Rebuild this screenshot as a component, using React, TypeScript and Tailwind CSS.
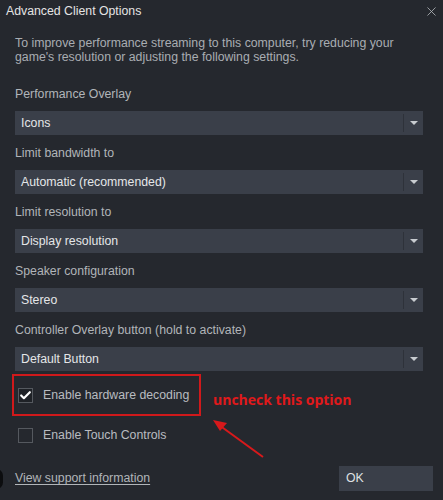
import { Check, X } from "lucide-react";

const selects = [
  { label: "Performance Overlay", value: "Icons" },
  { label: "Limit bandwidth to", value: "Automatic (recommended)" },
  { label: "Limit resolution to", value: "Display resolution" },
  { label: "Speaker configuration", value: "Stereo" },
  { label: "Controller Overlay button (hold to activate)", value: "Default Button" },
];

function Dropdown({ value }: { value: string }) {
  return (
    <div className="flex h-6 items-center bg-[#3a3f49] text-[#e4e6e8]">
      <span className="flex-1 pl-[6px]">{value}</span>
      <span className="h-[18px] w-px bg-[#2e323a]" />
      <span className="flex w-[19px] justify-center">
        <span className="h-0 w-0 border-x-[4px] border-t-[4px] border-x-transparent border-t-[#c8ccd0]" />
      </span>
    </div>
  );
}

export default function App() {
  return (
    <div className="relative h-[500px] w-[443px] overflow-hidden bg-[#25282e] font-['Liberation_Sans',Arial,sans-serif] text-[12.3px]">
      {/* ── Title bar ── */}
      <div className="flex h-[22px] items-center justify-between pl-[6px] pr-[4px]">
        <span className="text-[#e4e4e4]">Advanced Client Options</span>
        <X size={15} strokeWidth={1.3} className="text-[#b4b7bb]" />
      </div>

      <div className="px-[15px] pr-[20px]">
        <p className="mt-[14px] leading-[14px] text-[#a9adb2]">
          To improve performance streaming to this computer, try reducing your
          <br />
          game's resolution or adjusting the following settings.
        </p>

        <div className="mt-[22px] flex flex-col gap-[10px]">
          {selects.map((s) => (
            <div key={s.label}>
              <div className="mb-[9px] h-4 leading-4 text-[#b1b5b9]">{s.label}</div>
              <Dropdown value={s.value} />
            </div>
          ))}
        </div>
      </div>

      {/* ── Checkboxes ── */}
      <div className="relative mt-[16px] flex flex-col gap-[24px] px-[18px]">
        <div className="flex h-4 items-center gap-[10px]">
          <span className="flex h-[15px] w-[15px] items-center justify-center border border-[#55595f] bg-[#1f2227]">
            <Check size={13} strokeWidth={4} className="text-white" />
          </span>
          <span className="text-[#b9bcc0]">Enable hardware decoding</span>
        </div>
        <div className="flex h-4 items-center gap-[10px]">
          <span className="h-[15px] w-[15px] border border-[#55595f] bg-[#25282e]" />
          <span className="text-[#b9bcc0]">Enable Touch Controls</span>
        </div>

        {/* annotation */}
        <div className="absolute left-[12px] top-[-13px] h-[42px] w-[189px] border-2 border-[#d0191b]" />
        <span className="absolute left-[213px] top-[2px] font-['Open_Sans',sans-serif] text-[14px] font-bold text-[#e0191b]">
          uncheck this option
        </span>
        <svg className="absolute left-[206px] top-[28px]" width="64" height="46" viewBox="0 0 64 46">
          <line x1="57" y1="42" x2="13" y2="10" stroke="#d8191b" strokeWidth="2" />
          <polygon points="7,5 21,8 14,16" fill="#d8191b" />
        </svg>
      </div>

      {/* ── Footer ── */}
      <div className="mt-[23px] flex items-center justify-between pl-[15px] pr-[10px]">
        <span className="text-[#b1b5b9] underline underline-offset-2">View support information</span>
        <button className="h-[25px] w-[94px] bg-[#3a3f49] pl-[7px] text-left text-[#dfe1e3]">OK</button>
      </div>

      <div className="absolute left-[-10px] top-[469px] h-[20px] w-[13px] rounded-full bg-[#0c0d0f]" />
    </div>
  );
}
